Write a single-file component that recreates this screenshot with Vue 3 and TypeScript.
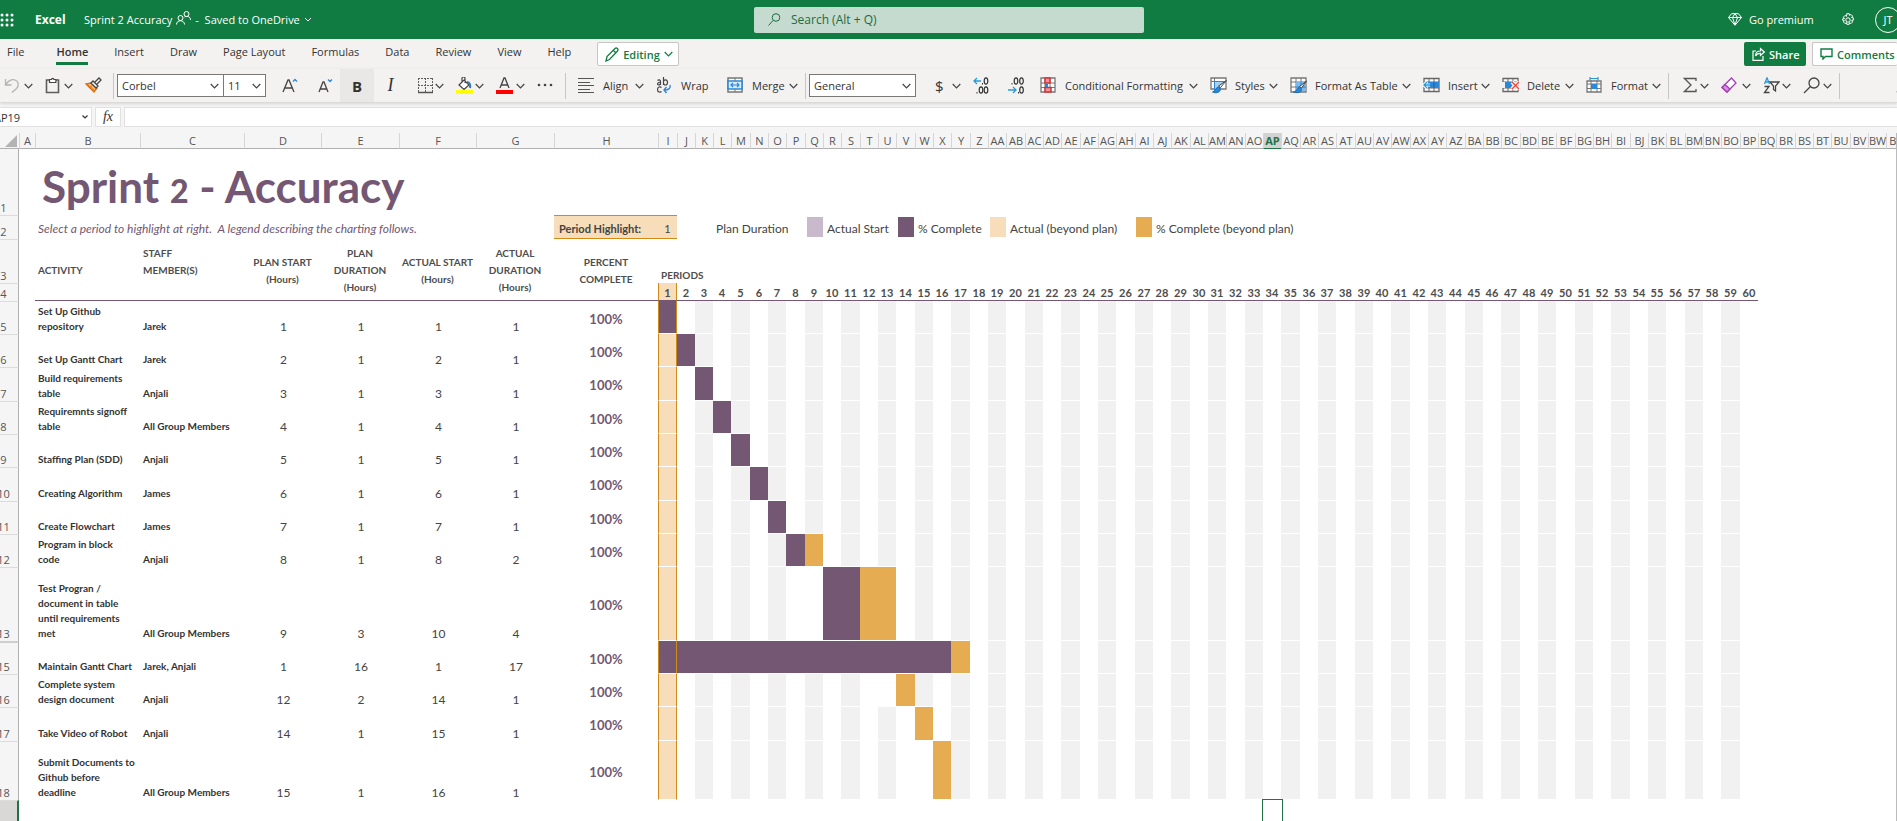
<script setup lang="ts">
import { ref } from 'vue'

interface Tool {
  id: string
  label?: string
  icon: string
  menu?: boolean
  width: number
  title: string
}

interface Task {
  row: number
  height: number
  activity: string
  staff: string
  planStart: number
  planDuration: number
  actualStart: number
  actualDuration: number
}

const icons: Record<string, string> = {
  undo: '<path d="M1.500 2v6h6M1.800 7.800C4 3.500 8 2 11 3c4 1.500 4 6 1.500 8.500L8 15.500" fill="none" stroke="#b5b3b1" stroke-width="1.300"/>',
  paste: '<path d="M5 3H1.500v12.500h12V3H10" fill="none" stroke="#605e5c" stroke-width="1.600"/><path d="M4.500 5.500v-3h2a1.200 1.200 0 0 1 2.400 0h2v3z" fill="#fff" stroke="#444" stroke-width="1.200"/>',
  brush: '<path d="M1 7l5-1 6 5-3 4z" fill="#f9b872" stroke="#d9730d" stroke-width="1.300"/><path d="M3 8l7 6M5 10l2-1" stroke="#d9730d" fill="none"/><path d="M6 6l2-2 5 5-2 2zM10 5l4-4 2 2-4 4" fill="#fff" stroke="#444" stroke-width="1.300"/>',
  grow: '<path d="M1 15L6 3h1l5 12M3 11h7" fill="none" stroke="#444" stroke-width="1.300"/><path d="M11 4.500L13 2.500l2 2" fill="none" stroke="#2b88d8" stroke-width="1.300"/>',
  shrink: '<path d="M1 15L5 5h1l4 10M2.500 12h6" fill="none" stroke="#444" stroke-width="1.300"/><path d="M10 2.500l2 2 2-2" fill="none" stroke="#2b88d8" stroke-width="1.300"/>',
  borders: '<path d="M1.500 1v14M8.500 1v14M15.500 1v14M1 1.500h15M1 8.500h15" fill="none" stroke="#605e5c" stroke-dasharray="2 1"/><path d="M1 15.500h15" stroke="#555" stroke-width="1.500"/>',
  fill: '<path d="M3 8l5-5 5 5-5 4.500zM6 5V1.500a1.500 1.500 0 0 1 3 0V6" fill="#fff" stroke="#444" stroke-width="1.200"/><path d="M11 5c3 0 3.500 3 3 6" fill="none" stroke="#2b7cc4" stroke-width="2"/><path d="M0 13h17v4H0z" fill="#ffff00"/>',
  color: '<path d="M4 11L8 1h1l4 10M5.500 8h6" fill="none" stroke="#444" stroke-width="1.300"/><path d="M0 13h17v4H0z" fill="#ff0000"/>',
  dots: '<circle cx="2" cy="8" r="1.300" fill="#444"/><circle cx="8" cy="8" r="1.300" fill="#444"/><circle cx="14" cy="8" r="1.300" fill="#444"/>',
  align: '<path d="M0 1.500h16M0 5.500h12M0 8.500h16M0 12.500h12M0 15.500h16" stroke="#555" stroke-width="1.100"/>',
  wrap: '<g fill="none" stroke="#444" stroke-width="1.200"><path d="M1.500 3.500c1-1 3-1 3 1V8M4.500 5C1 5 1 8 2.500 8c1 0 2-1 2-1M7.500 0v8M7.500 5c0-3 4-3 4 .5s-4 3-4 .5M5.500 10.500c-1-1-4-1-4 2s3 3 4 2"/></g><path d="M14 8c1 3-1 5-6 5M10.500 10L8 13l2.500 3" fill="none" stroke="#2b88d8" stroke-width="1.400"/>',
  merge: '<path d="M1 1h14v14H1z" fill="#fff" stroke="#777" stroke-width="1.500"/><path d="M1 4h14v8H1z" fill="#d6eaf8" stroke="#2b88d8" stroke-width="1.500"/><path d="M8 1v3M8 12v3" stroke="#777"/><path d="M4 8h8M6 6L4 8l2 2M10 6l2 2-2 2" fill="none" stroke="#2b88d8" stroke-width="1.200"/>',
  increase: '<path d="M8 4H1M4 1L1 4l3 3" fill="none" stroke="#2b9ad8" stroke-width="1.300"/><g fill="none" stroke="#333" stroke-width="1.200"><ellipse cx="13" cy="4" rx="1.800" ry="3.200"/><ellipse cx="8" cy="13" rx="1.800" ry="3.200"/><ellipse cx="13" cy="13" rx="1.800" ry="3.200"/></g><path d="M9 6h1v1.500H9zM3.500 15h1v1.500h-1z" fill="#333"/>',
  decrease: '<path d="M1 13h8M6 10l3 3-3 3" fill="none" stroke="#2b9ad8" stroke-width="1.300"/><g fill="none" stroke="#333" stroke-width="1.200"><ellipse cx="9" cy="4" rx="1.800" ry="3.200"/><ellipse cx="14.500" cy="4" rx="1.800" ry="3.200"/><ellipse cx="14.500" cy="13" rx="1.800" ry="3.200"/></g><path d="M4.500 6h1v1.500h-1zM11 15h1v1.500h-1z" fill="#333"/>',
  conditional: '<path d="M1 1h14v14H1z" fill="#fff" stroke="#777" stroke-width="1.300"/><path d="M1 6h14M1 10.500h14M5 1v14M10 1v14" stroke="#777"/><path d="M5 1h5v5H5zM5 10.500h6V15H5z" fill="#f4929a" stroke="#d13438" stroke-width="1.500"/><path d="M5 6.500h3v3.500H5z" fill="#2b88d8"/>',
  styles: '<path d="M1 1h15v11H1z" fill="#fff" stroke="#777" stroke-width="1.300"/><path d="M1 4.500h15M4.500 1v14" stroke="#777"/><path d="M4.500 4.500h10L8 13H4.500z" fill="#a6d1f2" stroke="#2b88d8"/><path d="M16.500 3.500l-6 7-2-1.500z" fill="#fff" stroke="#444"/><path d="M8.500 10c3 1 2 5-1 5.500-2 .5-4 0-5-.5 3 0 3-5 6-5z" fill="#2b88d8" stroke="#1b6cb5"/>',
  tableFormat: '<path d="M1 1h15v14H1z" fill="#fff" stroke="#777" stroke-width="1.300"/><path d="M1 5h15M1 10h15M6 1v14M11 1v14" stroke="#777"/><path d="M6 5h10v9H6z" fill="#7db9ea"/><path d="M11 5v9M6 10h10" stroke="#2b88d8"/><path d="M16.500 4l-5 7-2-1.500z" fill="#fff" stroke="#444"/><path d="M9.500 10.500c3 1 2 4.500-1 5-2 .3-4 0-5-.5 3 0 3-4.500 6-4.500z" fill="#2b88d8" stroke="#1b6cb5"/>',
  insert: '<path d="M1 1.500h15v13H1z" fill="#fff" stroke="#666" stroke-width="1.300"/><path d="M1 5h15M1 11h15M6 1v14M11 1v14" stroke="#666"/><path d="M3 5h13v6H3z" fill="#2b88d8"/><path d="M11 5v6" stroke="#1b5f9e"/><path d="M0 8h7M4 4.500L.8 8 4 11.500" fill="none" stroke="#fff" stroke-width="3"/><path d="M1 8h6M4 5L1 8l3 3" fill="none" stroke="#2b9ad8" stroke-width="1.300"/>',
  delete: '<path d="M1 1.500h15v13H1z" fill="#fff" stroke="#666" stroke-width="1.300"/><path d="M1 5h15M1 11h15M6 1v14M11 1v14" stroke="#666"/><path d="M0 5h3l2 3-2 3H0z" fill="#f3f2f1"/><path d="M3 5h7v6H3z" fill="#2b88d8"/><path d="M10 5l7 7M17 5l-7 7" stroke="#f3f2f1" stroke-width="4"/><path d="M10 5l7 7M17 5l-7 7" stroke="#e8483c" stroke-width="1.300"/>',
  format: '<path d="M1 4h14v11H1z" fill="#fff" stroke="#777" stroke-width="1.300"/><path d="M1 7h14M1 11.500h14M5 3v12M11 3v12" stroke="#777"/><path d="M5 7h6v5H5z" fill="#2b88d8"/><path d="M4 1.500h8M4 0v3M12 0v3" stroke="#2b9ad8" stroke-width="1.200"/>',
  sum: '<path d="M13 4V1.500H1.500L8 8l-6.500 6.500H13V12" fill="none" stroke="#555" stroke-width="1.300"/>',
  eraser: '<path d="M1 10.500L10.500 1 15 6l-9 9z" fill="#fff" stroke="#a33fb5" stroke-width="1.300"/><path d="M1 10.500L4 7.500l5 4.500-3 3z" fill="#d68fe0" stroke="#a33fb5" stroke-width="1.300"/>',
  sort: '<path d="M1.500 7L4 .8 6.500 7M2.500 5h3" fill="none" stroke="#2b9ad8" stroke-width="1.300"/><path d="M1.500 9.500h4.500L1.500 15.500H6.500" fill="none" stroke="#444" stroke-width="1.300"/><path d="M7 5h9l-3.500 4v5l-2-1.500V9z" fill="#fff" stroke="#444" stroke-width="1.300"/>',
  find: '<circle cx="11" cy="6" r="5" fill="none" stroke="#444" stroke-width="1.300"/><path d="M7.500 9.500L1 16" stroke="#444" stroke-width="1.300"/>',
}

const clipboardTools: Tool[] = [
  { id: 'undo', title: 'Undo', icon: 'undo', menu: true, width: 41 },
  { id: 'paste', title: 'Paste', icon: 'paste', menu: true, width: 40 },
  { id: 'brush', title: 'Format Painter', icon: 'brush', width: 28 },
]
const borderTools: Tool[] = [
  { id: 'borders', title: 'Borders', icon: 'borders', menu: true, width: 39 },
  { id: 'fill', title: 'Fill Color', icon: 'fill', menu: true, width: 40 },
  { id: 'color', title: 'Font Color', icon: 'color', menu: true, width: 41 },
  { id: 'more', title: 'More Font Options', icon: 'dots', width: 28 },
]
const alignTools: Tool[] = [
  { id: 'align', title: 'Align', label: 'Align', icon: 'align', menu: true, width: 78 },
  { id: 'wrap', title: 'Wrap', label: 'Wrap', icon: 'wrap', width: 71 },
  { id: 'merge', title: 'Merge', label: 'Merge', icon: 'merge', menu: true, width: 78 },
]
const decimalTools: Tool[] = [
  { id: 'increase', title: 'Increase Decimal', icon: 'increase', width: 34 },
  { id: 'decrease', title: 'Decrease Decimal', icon: 'decrease', width: 33 },
]
const cellTools: Tool[] = [
  { id: 'conditional', title: 'Conditional Formatting', label: 'Conditional Formatting', icon: 'conditional', menu: true, width: 170 },
  { id: 'styles', title: 'Styles', label: 'Styles', icon: 'styles', menu: true, width: 80 },
  { id: 'table', title: 'Format As Table', label: 'Format As Table', icon: 'tableFormat', menu: true, width: 133 },
  { id: 'insert', title: 'Insert', label: 'Insert', icon: 'insert', menu: true, width: 79 },
  { id: 'delete', title: 'Delete', label: 'Delete', icon: 'delete', menu: true, width: 84 },
  { id: 'format', title: 'Format', label: 'Format', icon: 'format', menu: true, width: 82 },
]
const editTools: Tool[] = [
  { id: 'sum', title: 'AutoSum', icon: 'sum', menu: true, width: 38 },
  { id: 'eraser', title: 'Clear', icon: 'eraser', menu: true, width: 42 },
  { id: 'sort', title: 'Sort & Filter', icon: 'sort', menu: true, width: 40 },
  { id: 'find', title: 'Find & Select', icon: 'find', menu: true, width: 36 },
]

const tabs = ['File', 'Home', 'Insert', 'Draw', 'Page Layout', 'Formulas', 'Data', 'Review', 'View', 'Help']
const activeTab = ref('Home')
const fontName = ref('Corbel')
const fontSize = ref('11')
const numberFormat = ref('General')
const cellName = ref('AP19')
const formula = ref('')
const search = ref('')

const PERIODS = 60
const TRAILING = 8
const highlighted = 1
const selectedColumn = 'AP'

const fixedWidths = [33, 16, 105, 104, 77, 78, 77, 78, 104]
/* Period columns are 55px per three columns, rounded to whole pixels. */
const periodWidths = Array.from({ length: PERIODS + TRAILING }, (_, i) =>
  i === 0 ? 19 : i === 1 ? 18 : Math.floor((55 * (i + 1) + 1) / 3) - Math.floor((55 * i + 1) / 3),
)

function columnName(n: number): string {
  return n <= 26 ? String.fromCharCode(64 + n) : columnName(Math.floor((n - 1) / 26)) + columnName(((n - 1) % 26) + 1)
}
const columns = Array.from({ length: 8 + PERIODS + TRAILING }, (_, i) => columnName(i + 1))
const selectedIndex = columns.indexOf(selectedColumn)

const raw: [number, number, string, string, number, number, number, number][] = [
  [5, 33, 'Set Up Github\nrepository', 'Jarek', 1, 1, 1, 1],
  [6, 33, 'Set Up Gantt Chart', 'Jarek', 2, 1, 2, 1],
  [7, 34, 'Build requirements\ntable', 'Anjali', 3, 1, 3, 1],
  [8, 33, 'Requiremnts signoff\ntable', 'All Group Members', 4, 1, 4, 1],
  [9, 33, 'Staffing Plan (SDD)', 'Anjali', 5, 1, 5, 1],
  [10, 34, 'Creating Algorithm', 'James', 6, 1, 6, 1],
  [11, 33, 'Create Flowchart', 'James', 7, 1, 7, 1],
  [12, 33, 'Program in block\ncode', 'Anjali', 8, 1, 8, 2],
  [13, 74, 'Test Progran /\ndocument in table\nuntil requirements\nmet', 'All Group Members', 9, 3, 10, 4],
  [15, 33, 'Maintain Gantt Chart', 'Jarek, Anjali', 1, 16, 1, 17],
  [16, 33, 'Complete system\ndesign document', 'Anjali', 12, 2, 14, 1],
  [17, 34, 'Take Video of Robot', 'Anjali', 14, 1, 15, 1],
  [18, 59, 'Submit Documents to\nGithub before\ndeadline', 'All Group Members', 15, 1, 16, 1],
]
const tasks: Task[] = raw.map(([row, height, activity, staff, planStart, planDuration, actualStart, actualDuration]) => ({
  row, height, activity, staff, planStart, planDuration, actualStart, actualDuration,
}))

function barClass(t: Task, period: number): string[] {
  const planned = period >= t.planStart && period < t.planStart + t.planDuration
  const actual = period >= t.actualStart && period < t.actualStart + t.actualDuration
  const out = ['bar']
  if (actual) out.push(planned ? 'done' : 'beyond')
  else if (period === highlighted) out.push('lit')
  else if (!planned && period % 2 === 1) out.push('band')
  if (period === highlighted) out.push('edge')
  return out
}
</script>

<template>
  <div class="app">
    <header class="topbar">
      <button class="plain waffle" aria-label="App launcher">
        <svg width="14" height="14" viewBox="0 0 14 14"><g fill="#fff"><template v-for="y in 3" :key="y"><circle v-for="x in 3" :key="x" :cx="x * 5 - 3" :cy="y * 5 - 3" r="1.500" /></template></g></svg>
      </button>
      <strong class="brand">Excel</strong>
      <button class="plain doc">
        <span>Sprint 2 Accuracy</span>
        <svg width="15" height="18" viewBox="0 0 15 18" fill="none" stroke="#fff"><circle cx="4.500" cy="7" r="2.500" /><path d="M.5 13.500c0-5 8-5 8 0" /><circle cx="10.500" cy="3" r="2.500" /><path d="M8.500 6c2-1 6-1 6 3" /></svg>
        <span>-&nbsp; Saved to OneDrive</span>
        <svg width="8" height="5" viewBox="0 0 8 5"><path d="M1 1l3 3 3-3" fill="none" stroke="#fff" /></svg>
      </button>
      <label class="search">
        <svg width="13" height="13" viewBox="0 0 13 13" fill="none" stroke="#1e6b42"><circle cx="8" cy="4.500" r="3.800" /><path d="M5 7.500L.5 12.500" /></svg>
        <input v-model="search" type="text" placeholder="Search (Alt + Q)" aria-label="Search" />
      </label>
      <div class="account">
        <button class="plain premium">
          <svg width="14" height="13" viewBox="0 0 14 13" fill="none" stroke="#fff"><path d="M3.500.7h7l3 3.800L7 12.300.5 4.500zM.5 4.500h13M4.500 4.500L7 12l2.500-7.500L7 .7z" /></svg>
          <span>Go premium</span>
        </button>
        <button class="plain" aria-label="Settings">
          <svg width="14" height="14" viewBox="0 0 14 14" fill="none" stroke="#fff"><circle cx="7" cy="7" r="2.200" /><path d="M5.800.7h2.400l.3 1.700 1.400-1 1.700 1.700-1 1.400 1.700.3v2.400l-1.700.3 1 1.400-1.700 1.700-1.400-1-.3 1.700H5.800l-.3-1.700-1.400 1-1.700-1.700 1-1.400-1.700-.3V5.800l1.700-.3-1-1.400 1.700-1.700 1.400 1z" /></svg>
        </button>
        <button class="plain avatar">JT</button>
      </div>
    </header>

    <nav class="tabs" aria-label="Ribbon tabs">
      <button v-for="t in tabs" :key="t" class="plain tab" :class="{ active: t === activeTab }" @click="activeTab = t">{{ t }}</button>
      <button class="outlined editing">
        <svg width="14" height="15" viewBox="0 0 14 15" fill="none" stroke="#107c41" stroke-width="1.300"><path d="M1 14l1-4.500L10 1.500c1.500-1.500 4 .5 2.500 2.500L4.500 12.500zM8.500 3.500l2.500 2.500" /></svg>
        <span>Editing</span>
        <svg width="9" height="6" viewBox="0 0 9 6"><path d="M.7 1l3.800 3.800L8.300 1" fill="none" stroke="#107c41" stroke-width="1.200" /></svg>
      </button>
      <div class="share-group">
        <button class="share">
          <svg width="13" height="14" viewBox="0 0 13 14" fill="none" stroke="#fff" stroke-width="1.200"><path d="M4 4H1v9.300h10V9" /><path d="M3.500 9c0-4 2-5 5-5V1.500L12.300 5 8.500 8.500V6.300c-2.500 0-4 .7-5 2.700z" /></svg>
          <span>Share</span>
        </button>
        <button class="outlined comments">
          <svg width="13" height="12" viewBox="0 0 13 12" fill="none" stroke="#107c41" stroke-width="1.400"><path d="M1 1h11v7.500H5.500L3 11V8.500H1z" /></svg>
          <span>Comments</span>
        </button>
      </div>
    </nav>

    <div class="ribbon" role="toolbar" aria-label="Home">
      <div class="group">
        <button v-for="t in clipboardTools" :key="t.id" class="tool" :title="t.title" :style="{ width: t.width + 'px' }">
          <svg width="17" height="17" viewBox="0 0 17 17" v-html="icons[t.icon]"></svg>
          <svg v-if="t.menu" class="chev" width="9" height="6" viewBox="0 0 9 6"><path d="M.7 1l3.800 3.800L8.300 1" /></svg>
        </button>
      </div>
      <div class="group font-group">
        <span class="picker font-name"><select v-model="fontName" aria-label="Font"><option>Corbel</option></select><svg class="chev" width="9" height="6" viewBox="0 0 9 6"><path d="M.7 1l3.800 3.800L8.300 1" /></svg></span>
        <span class="picker font-size"><select v-model="fontSize" aria-label="Font size"><option>11</option></select><svg class="chev" width="9" height="6" viewBox="0 0 9 6"><path d="M.7 1l3.800 3.800L8.300 1" /></svg></span>
        <button class="tool grow" title="Increase Font Size"><svg width="17" height="17" viewBox="0 0 17 17" v-html="icons.grow"></svg></button>
        <button class="tool shrink" title="Decrease Font Size"><svg width="17" height="17" viewBox="0 0 17 17" v-html="icons.shrink"></svg></button>
        <button class="tool bold" title="Bold">B</button>
        <button class="tool italic" title="Italic">I</button>
        <button v-for="t in borderTools" :key="t.id" class="tool" :title="t.title" :style="{ width: t.width + 'px' }">
          <svg width="17" height="17" viewBox="0 0 17 17" v-html="icons[t.icon]"></svg>
          <svg v-if="t.menu" class="chev" width="9" height="6" viewBox="0 0 9 6"><path d="M.7 1l3.800 3.800L8.300 1" /></svg>
        </button>
      </div>
      <div class="group align-group">
        <button v-for="t in alignTools" :key="t.id" class="tool" :title="t.title" :style="{ width: t.width + 'px' }">
          <svg width="17" height="17" viewBox="0 0 17 17" v-html="icons[t.icon]"></svg>
          <span class="label">{{ t.label }}</span>
          <svg v-if="t.menu" class="chev" width="9" height="6" viewBox="0 0 9 6"><path d="M.7 1l3.800 3.800L8.300 1" /></svg>
        </button>
      </div>
      <div class="group number-group">
        <span class="picker number"><select v-model="numberFormat" aria-label="Number format"><option>General</option></select><svg class="chev" width="9" height="6" viewBox="0 0 9 6"><path d="M.7 1l3.800 3.800L8.300 1" /></svg></span>
        <button class="tool currency" title="Accounting Format"><span>$</span><svg class="chev" width="9" height="6" viewBox="0 0 9 6"><path d="M.7 1l3.800 3.800L8.300 1" /></svg></button>
        <button v-for="t in decimalTools" :key="t.id" class="tool" :title="t.title" :style="{ width: t.width + 'px' }">
          <svg width="17" height="17" viewBox="0 0 17 17" v-html="icons[t.icon]"></svg>
        </button>
        <button v-for="t in cellTools" :key="t.id" class="tool" :title="t.title" :style="{ width: t.width + 'px' }">
          <svg width="17" height="17" viewBox="0 0 17 17" v-html="icons[t.icon]"></svg>
          <span class="label">{{ t.label }}</span>
          <svg class="chev" width="9" height="6" viewBox="0 0 9 6"><path d="M.7 1l3.800 3.800L8.300 1" /></svg>
        </button>
      </div>
      <div class="group edit-group">
        <button v-for="t in editTools" :key="t.id" class="tool" :title="t.title" :style="{ width: t.width + 'px' }">
          <svg width="17" height="17" viewBox="0 0 17 17" v-html="icons[t.icon]"></svg>
          <svg class="chev" width="9" height="6" viewBox="0 0 9 6"><path d="M.7 1l3.800 3.800L8.300 1" /></svg>
        </button>
      </div>
      <button class="plain collapse" aria-label="Collapse ribbon"><svg width="9" height="6" viewBox="0 0 9 6"><path d="M.7 1l3.800 3.800L8.300 1" fill="none" stroke="#333" /></svg></button>
    </div>

    <div class="formula-bar">
      <div class="name-box">
        <input v-model="cellName" type="text" aria-label="Name box" />
        <svg width="6" height="4" viewBox="0 0 6 4"><path d="M.5.5L3 3 5.500.5" fill="none" stroke="#333" stroke-width="1.200" /></svg>
      </div>
      <button class="fx" aria-label="Insert function">fx</button>
      <input v-model="formula" class="formula" type="text" aria-label="Formula" />
    </div>

    <main class="sheet">
      <table class="grid">
        <colgroup>
          <col v-for="(w, i) in fixedWidths" :key="'f' + i" :style="{ width: w + 'px' }" />
          <col v-for="(w, i) in periodWidths" :key="'p' + i" :style="{ width: w + 'px' }" />
        </colgroup>
        <thead>
          <tr class="letters">
            <th class="corner"><svg width="12" height="12" viewBox="0 0 12 12"><path d="M12 0v12H0z" fill="#b3b3b3" /></svg></th>
            <th v-for="c in columns" :key="c" scope="col" :class="{ current: c === selectedColumn }">{{ c }}</th>
          </tr>
        </thead>
        <tbody>
          <tr class="title-row">
            <th scope="row" class="gutter">1</th>
            <td></td>
            <td :colspan="columns.length - 1" class="title"><h1>Sprint <span class="low">2</span> - Accuracy</h1></td>
          </tr>
          <tr class="legend-row">
            <th scope="row" class="gutter">2</th>
            <td></td>
            <td colspan="6" class="hint">Select a period to highlight at right.&nbsp; A legend describing the charting follows.</td>
            <td class="pick pick-label">Period Highlight:</td>
            <td class="pick pick-value">{{ highlighted }}</td>
            <td :colspan="PERIODS + TRAILING - 1">
              <div class="legend">
                <span class="key key-plan"><span>Plan Duration</span></span>
                <span class="key key-start"><i class="swatch s-start"></i><span>Actual Start</span></span>
                <span class="key key-done"><i class="swatch s-done"></i><span>% Complete</span></span>
                <span class="key key-beyond"><i class="swatch s-actual"></i><span>Actual (beyond plan)</span></span>
                <span class="key"><i class="swatch s-beyond"></i><span>% Complete (beyond plan)</span></span>
              </div>
            </td>
          </tr>
          <tr class="heads">
            <th scope="row" class="gutter">3</th>
            <td rowspan="2"></td>
            <th rowspan="2" class="head left">ACTIVITY</th>
            <th rowspan="2" class="head left upper">STAFF<br />MEMBER(S)</th>
            <th rowspan="2" class="head">PLAN START<br />(Hours)</th>
            <th rowspan="2" class="head">PLAN<br />DURATION<br />(Hours)</th>
            <th rowspan="2" class="head">ACTUAL START<br />(Hours)</th>
            <th rowspan="2" class="head">ACTUAL<br />DURATION<br />(Hours)</th>
            <th rowspan="2" class="head">PERCENT<br />COMPLETE</th>
            <th :colspan="PERIODS" class="periods">PERIODS</th>
            <td :colspan="TRAILING"></td>
          </tr>
          <tr class="numbers">
            <th scope="row" class="gutter">4</th>
            <th v-for="p in PERIODS" :key="p" class="period" :class="{ 'lit edge': p === highlighted }">{{ p }}</th>
            <td :colspan="TRAILING"></td>
          </tr>
          <tr v-for="t in tasks" :key="t.row" :style="{ height: t.height + 'px' }">
            <th scope="row" class="gutter" :class="{ 'after-hidden': t.row === 15 }">{{ t.row }}</th>
            <td></td>
            <td class="text">{{ t.activity }}</td>
            <td class="text">{{ t.staff }}</td>
            <td class="num">{{ t.planStart }}</td>
            <td class="num">{{ t.planDuration }}</td>
            <td class="num">{{ t.actualStart }}</td>
            <td class="num">{{ t.actualDuration }}</td>
            <td class="percent">100%</td>
            <td v-for="p in PERIODS" :key="p" :class="barClass(t, p)"></td>
            <td :colspan="TRAILING"></td>
          </tr>
          <tr class="last">
            <th scope="row" class="gutter current" aria-label="19"></th>
            <td :colspan="selectedIndex"></td>
            <td class="selected"></td>
            <td :colspan="columns.length - selectedIndex - 1"></td>
          </tr>
        </tbody>
      </table>
    </main>
  </div>
</template>

<style>
html,
body {
  margin: 0;
  overflow: hidden;
}
</style>

<style scoped>
.app {
  display: flex;
  flex-direction: column;
  height: 100vh;
  overflow: hidden;
  background: #fff;
  color: #333;
  font-family: "Open Sans", "Noto Sans", sans-serif;
  font-size: 11px;
}
button,
input,
select {
  font: inherit;
  color: inherit;
  box-sizing: border-box;
}
button {
  padding: 0;
  border: 0;
  background: none;
  white-space: nowrap;
}
svg {
  flex: none;
}

/* Title bar */
.topbar {
  display: flex;
  align-items: center;
  flex: none;
  height: 39px;
  background: #107c41;
  color: #fff;
}
.plain {
  display: flex;
  align-items: center;
}
.waffle {
  width: 35px;
}
.brand {
  width: 49px;
  font-size: 12px;
}
.doc {
  gap: 4px;
  width: 670px;
}
.search {
  display: flex;
  align-items: center;
  gap: 10px;
  flex: 0 1 390px;
  box-sizing: border-box;
  height: 26px;
  padding-left: 14px;
  border-radius: 2px;
  background: #c5dbcf;
  color: #1e6b42;
  font-size: 12px;
}
.search input {
  flex: 1;
  min-width: 0;
  padding: 0;
  border: 0;
  outline: 0;
  background: none;
}
.search input::placeholder {
  color: #1e6b42;
  opacity: 1;
}
.account {
  display: flex;
  align-items: center;
  gap: 20px;
  margin-left: auto;
  margin-right: -4px;
}
.premium {
  gap: 7px;
  width: 93px;
}
.avatar {
  justify-content: center;
  width: 26px;
  height: 26px;
  border: 1px solid #fff;
  border-radius: 50%;
}

/* Tabs */
.tabs {
  display: flex;
  align-items: flex-start;
  flex: none;
  height: 30px;
  padding-left: 7px;
  box-sizing: border-box;
  background: #f3f2f1;
}
.tab {
  height: 26px;
  margin-right: 26px;
  padding-top: 1px;
  border-bottom: 3px solid transparent;
  color: #333;
}
.tab:first-child {
  margin-right: 32px;
}
.tab.active {
  border-bottom-color: #107c41;
  font-weight: 600;
}
.outlined {
  display: flex;
  align-items: center;
  height: 24px;
  margin-top: 3px;
  border: 1px solid #c8c6c4;
  border-radius: 2px;
  background: #fff;
  color: #107c41;
  font-weight: 600;
}
.editing {
  gap: 4px;
  width: 82px;
  padding-left: 7px;
}
.share-group {
  display: flex;
  gap: 6px;
  margin-left: auto;
}
.share {
  display: flex;
  align-items: center;
  gap: 4px;
  width: 62px;
  height: 24px;
  margin-top: 3px;
  padding-left: 8px;
  border-radius: 2px;
  background: #107c41;
  color: #fff;
  font-weight: 600;
}
.comments {
  gap: 4px;
  width: 85px;
  padding-left: 7px;
  border-right: 0;
}

/* Ribbon */
.ribbon {
  display: flex;
  align-items: center;
  flex: none;
  height: 33px;
  padding-left: 4px;
  border-bottom: 1px solid #dcdad8;
  background: #f3f2f1;
  box-shadow: 0 1px 3px #d8d6d4;
  z-index: 1;
}
.group {
  display: flex;
  align-items: center;
  flex: none;
  height: 26px;
  border-right: 1px solid #c8c6c4;
}
.tool {
  display: flex;
  align-items: center;
  flex: none;
  height: 33px;
  padding-right: 12px;
}
.group .tool:last-child {
  padding-right: 7px;
}
.label {
  margin-left: 8px;
}
.chev {
  margin-left: auto;
}
.chev path {
  fill: none;
  stroke: #444;
  stroke-width: 1.200;
}
.font-group {
  padding-left: 3px;
}
.align-group {
  padding-left: 12px;
}
.number-group {
  padding-left: 3px;
}
.edit-group {
  padding-left: 14px;
}
.picker {
  display: flex;
  align-items: center;
  box-sizing: border-box;
  height: 23px;
  padding-right: 4px;
  border: 1px solid #7a7876;
  background: #fff;
}
.picker select {
  flex: 1;
  min-width: 0;
  padding: 0 0 0 4px;
  border: 0;
  outline: 0;
  appearance: none;
  background: none;
}
.font-name {
  width: 107px;
}
.font-size {
  width: 42px;
  border-left: 0;
}
.number {
  width: 107px;
}
.grow {
  width: 36px;
  margin-left: 16px;
}
.shrink {
  width: 22px;
  padding-right: 0;
}
.tool.bold {
  justify-content: center;
  width: 34px;
  padding: 0;
  background: #eae8e6;
  font-size: 15px;
  font-weight: 700;
}
.tool.italic {
  justify-content: center;
  width: 43px;
  padding: 0 10px 0 0;
  font-family: "Liberation Serif", serif;
  font-size: 18px;
  font-style: italic;
}
.currency {
  width: 57px;
  padding-left: 19px;
}
.currency span {
  font-size: 15px;
}
.collapse {
  margin-left: auto;
  margin-right: -8px;
  align-self: flex-end;
  padding-bottom: 5px;
}

/* Formula bar */
.formula-bar {
  display: flex;
  gap: 3px;
  flex: none;
  height: 20px;
  padding: 4px 0 6px;
  background: #f5f5f5;
}
.name-box {
  display: flex;
  align-items: center;
  width: 106px;
  margin-left: -14px;
  padding-right: 3px;
  box-sizing: border-box;
  border: 1px solid #e1e1e1;
  background: #fff;
}
.name-box input {
  flex: 1;
  min-width: 0;
  padding: 0 0 0 7px;
  border: 0;
  outline: 0;
  background: none;
}
.fx {
  width: 26px;
  border: 1px solid #e1e1e1;
  background: #fff;
  font-family: "Liberation Serif", serif;
  font-size: 14px;
  font-style: italic;
  line-height: 16px;
}
.formula {
  flex: 1;
  border: 1px solid #e1e1e1;
  border-right: 0;
  outline: 0;
  background: #fff;
}

/* Worksheet */
.sheet {
  flex: 1;
  min-height: 0;
  overflow: hidden;
  border-right: 1px solid #bbb;
}
.grid {
  width: 1px;
  margin-left: -14px;
  table-layout: fixed;
  border-collapse: separate;
  border-spacing: 0;
  font-family: Lato, "Open Sans", sans-serif;
}
.grid th,
.grid td {
  box-sizing: border-box;
  padding: 0;
  white-space: nowrap;
}
.letters {
  height: 16px;
}
.letters th {
  border-left: 1px solid #d6d6d6;
  border-bottom: 1px solid #b0b0b0;
  background: #f5f5f5;
  color: #555;
  font-family: "Open Sans", "Noto Sans", sans-serif;
  font-size: 11px;
  font-weight: 400;
  line-height: 15px;
}
.letters th.corner {
  border-left: 0;
}
.grid .corner {
  padding-right: 2px;
}
.corner svg {
  display: block;
  margin-left: auto;
}
.letters th.current {
  border-bottom: 1px solid #217346;
  background: #d2d2d2;
  color: #217346;
  font-weight: 700;
}
.grid .gutter {
  padding-left: 3px;
  border-top: 1px solid #dcdcdc;
  border-right: 1px solid #b0b0b0;
  background: #f5f5f5;
  color: #555;
  font-family: "Open Sans", "Noto Sans", sans-serif;
  font-size: 11px;
  font-weight: 400;
  line-height: 15px;
  vertical-align: bottom;
}
.grid .gutter.after-hidden {
  border-top: 2px solid #cfcfcf;
}
.grid .gutter.current {
  border-right: 2px solid #217346;
  background: #d9d8d7;
}
.title-row {
  height: 66px;
}
.title-row .gutter {
  border-top: 0;
}
.grid .title {
  padding: 10px 0 0 7px;
  vertical-align: top;
}
.title h1 {
  height: 54px;
  margin: 0;
  color: #735773;
  font-size: 44px;
  font-weight: 700;
  line-height: 54px;
}
.low {
  font-size: 32px;
  font-weight: 900;
  line-height: 32px;
}
.legend-row {
  height: 24px;
}
.grid .hint {
  padding: 2px 0 0 3px;
  color: #735773;
  font-size: 12px;
  font-style: italic;
}
.pick {
  border-top: 1px solid #cf8a17;
  border-bottom: 1px solid #cf8a17;
  background: #f7ddb9;
  color: #444;
  font-size: 11px;
}
.grid .pick-label {
  padding: 2px 0 0 5px;
  font-weight: 700;
}
.grid .pick-value {
  padding-top: 2px;
  text-align: center;
}
.legend {
  display: flex;
  align-items: center;
  height: 20px;
  padding-left: 39px;
  color: #444;
  font-size: 12px;
}
.key {
  display: flex;
  align-items: center;
  gap: 4px;
}
.key span {
  padding-top: 2px;
}
.key-plan,
.key-start {
  width: 91px;
}
.key-done {
  width: 92px;
}
.key-beyond {
  width: 146px;
}
.swatch {
  width: 16px;
  height: 20px;
}
.s-start {
  background: #c9b9cd;
}
.s-done {
  background: #735773;
}
.s-actual {
  background: #f7ddb9;
}
.s-beyond {
  background: #e6ac51;
}
.heads {
  height: 44px;
}
.numbers {
  height: 18px;
}
.grid .head {
  padding-top: 2px;
  border-bottom: 1px solid #735773;
  color: #4d4d4d;
  font-size: 10px;
  line-height: 17px;
  text-align: center;
}
.grid .left {
  padding-left: 3px;
  text-align: left;
}
.grid .upper {
  padding-bottom: 17px;
}
.grid .periods {
  padding-left: 3px;
  color: #4d4d4d;
  font-size: 10px;
  line-height: 15px;
  text-align: left;
  vertical-align: bottom;
}
.grid .period {
  padding-top: 2px;
  border-bottom: 1px solid #735773;
  color: #4d4d4d;
  font-size: 11px;
  line-height: 15px;
}
.grid .text {
  padding-left: 3px;
  color: #333;
  font-size: 10px;
  font-weight: 700;
  line-height: 15px;
  white-space: pre;
  vertical-align: bottom;
}
.grid .num {
  padding-left: 2px;
  color: #444;
  font-size: 12px;
  line-height: 15px;
  text-align: center;
  vertical-align: bottom;
}
.grid .percent {
  padding-top: 2px;
  color: #735773;
  font-size: 13px;
  font-weight: 700;
  text-align: center;
}
.bar {
  border-bottom: 1px solid #fff;
}
.band {
  background: #f1f1f1;
}
.done {
  background: #735773;
}
.beyond {
  background: #e6ac51;
}
.lit {
  background: #f7ddb9;
}
.edge {
  border-left: 1px solid #cf8a17;
  border-right: 1px solid #cf8a17;
}
.last {
  height: 33px;
}
.selected {
  position: relative;
}
.selected::after {
  content: "";
  position: absolute;
  inset: -1px -2px 0 -1px;
  border: 1px solid #217346;
}
</style>
